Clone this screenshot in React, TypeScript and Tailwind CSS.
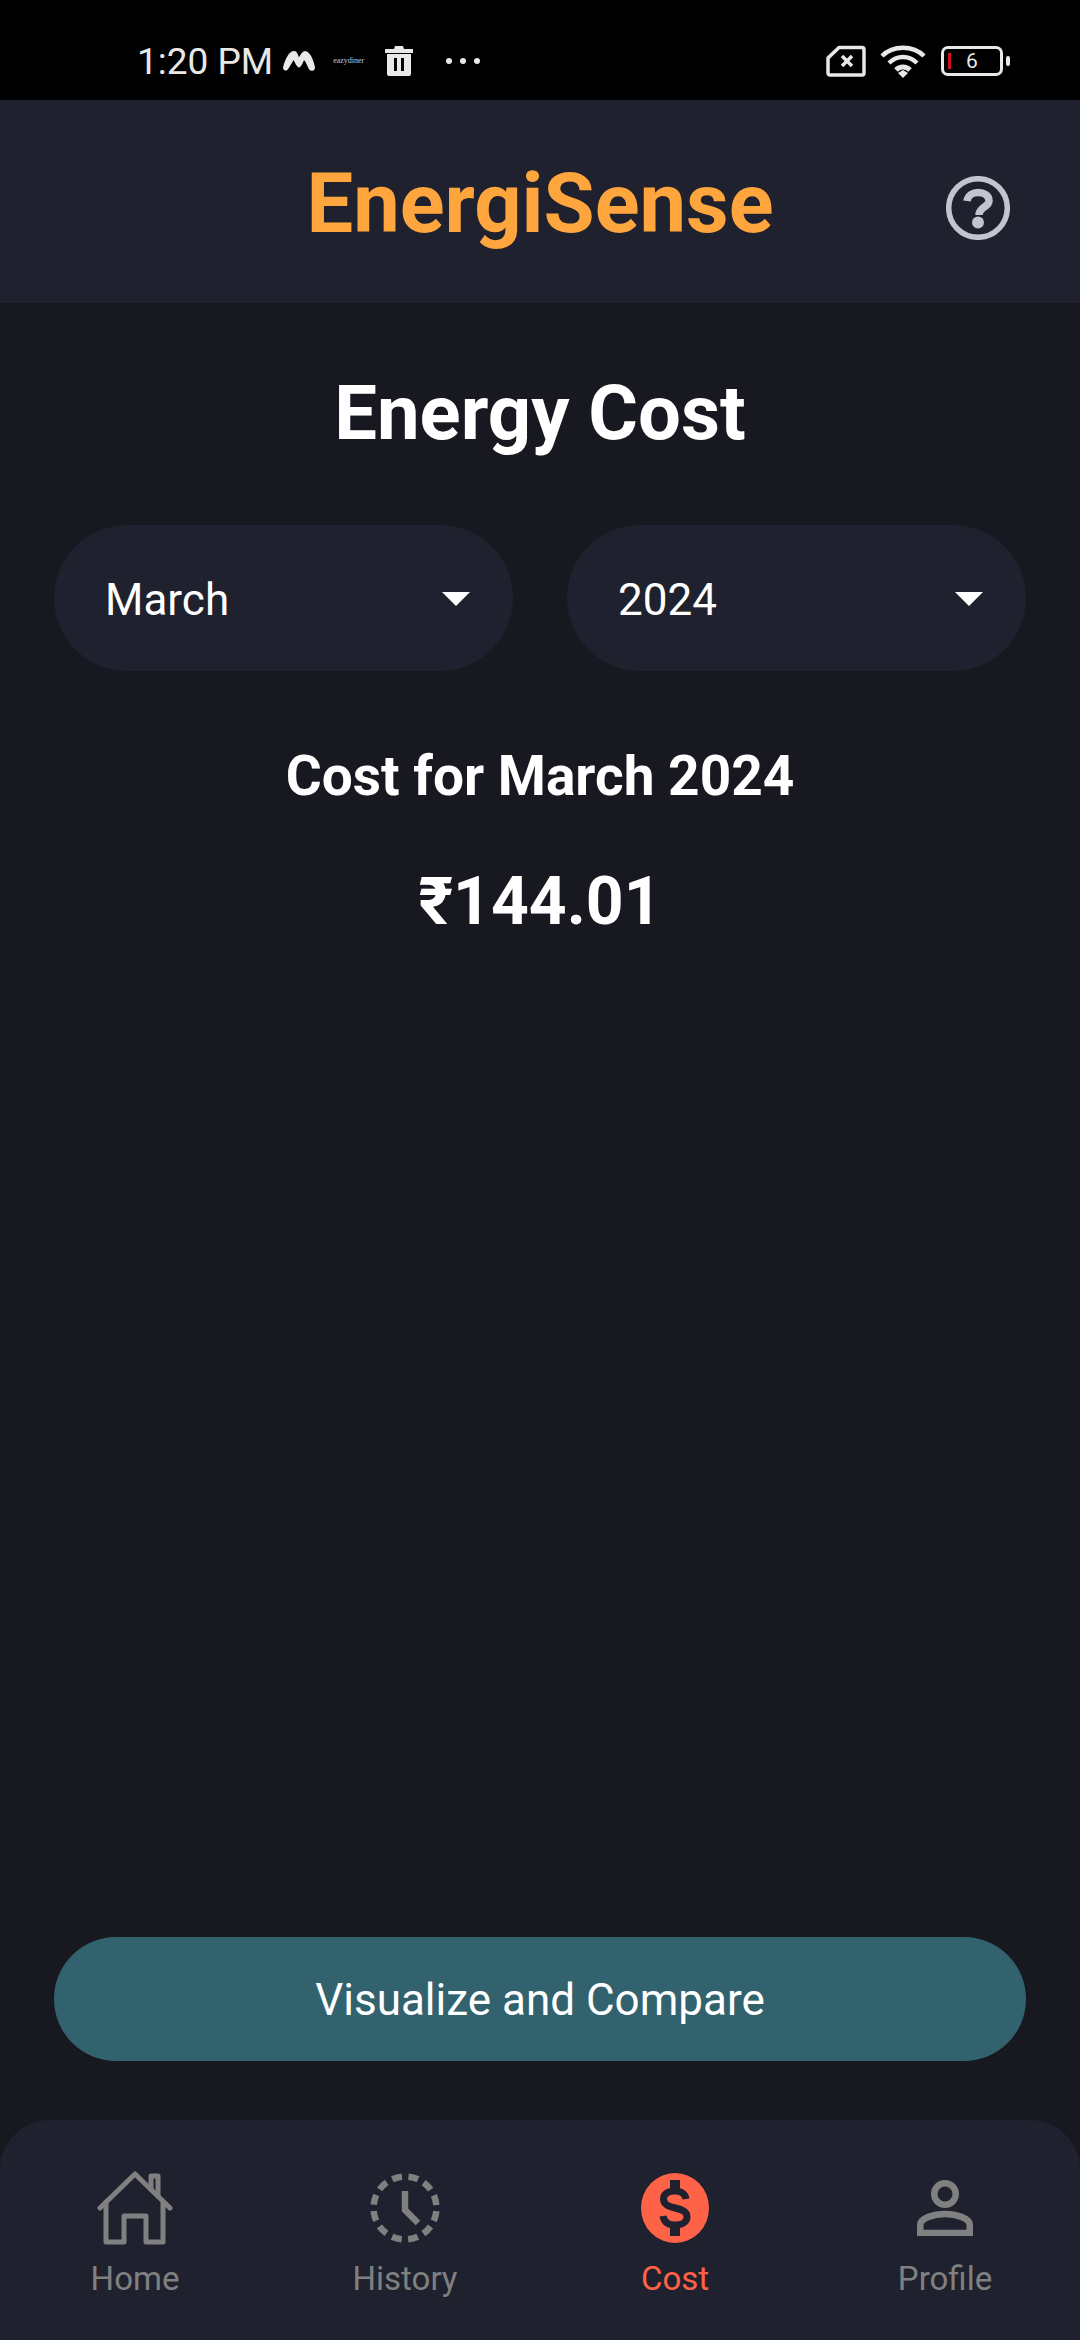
const font = { fontFamily: "Roboto, sans-serif" };

function Caret() {
  return <div className="mt-[2px] w-0 h-0 border-l-[14px] border-r-[14px] border-t-[14px] border-l-transparent border-r-transparent border-t-white" />;
}

function Select({ label }: { label: string }) {
  return (
    <div className="flex-1 h-[146px] rounded-[73px] bg-[#1f222e] flex items-center justify-between pl-[51px] pr-[43px]">
      <span className="text-[44px] text-white mt-[3px]">{label}</span>
      <Caret />
    </div>
  );
}

function StatusBar() {
  return (
    <div className="h-[100px] bg-black flex items-center justify-between pt-[22px] pl-[137px] pr-[70px] text-[#e8e8e8]">
      <div className="flex items-center">
        <span className="text-[37px] leading-none">1:20 PM</span>
        <svg className="ml-[10px]" width="32" height="22" viewBox="0 0 32 24" fill="currentColor" preserveAspectRatio="none">
          <path d="M0 19 C2 10 6 1 11 1 C14 1 15 5 16 8 C18 4 20 1 22 1 C27 1 31 12 32 19 C32 23 28 24 26 21 C24 17 23 13 21 11 C20 14 18 19 16 19 C14 19 12 14 10.500 11 C9 14 7 18 5 21 C3 24 0 22 0 19 Z" />
        </svg>
        <span className="ml-[18px] w-[31px] text-[8px] leading-none text-[#c8c8c8]" style={{ fontFamily: "Liberation Serif, serif" }}>eazydiner</span>
        <svg className="ml-[21px]" width="28" height="30" viewBox="0 0 28 30" fill="currentColor">
          <path d="M10 0h8l1 3h9v4H0V3h9zM2 8h24v20a2 2 0 0 1-2 2H4a2 2 0 0 1-2-2zm7 4v13h3V12zm7 0v13h3V12z" />
        </svg>
        <div className="ml-[33px] flex gap-[8px]">
          <div className="w-[6px] h-[6px] rounded-full bg-[#e8e8e8]" />
          <div className="w-[6px] h-[6px] rounded-full bg-[#e8e8e8]" />
          <div className="w-[6px] h-[6px] rounded-full bg-[#e8e8e8]" />
        </div>
      </div>
      <div className="flex items-center">
        <svg width="40" height="32" viewBox="0 0 40 32" fill="none" stroke="currentColor" strokeWidth="3.500" strokeLinejoin="round">
          <path d="M13 2.500H36a2 2 0 0 1 2 2V28a2 2 0 0 1-2 2H4a2 2 0 0 1-2-2V13z" />
          <path d="M16 11l10 10M26 11L16 21" strokeWidth="3.500" />
        </svg>
        <svg className="ml-[14px]" width="46" height="34" viewBox="0 0 46 34" fill="none" stroke="currentColor" strokeWidth="4.500">
          <path d="M2 12C13 1 33 1 44 12" />
          <path d="M9 19C17 11 29 11 37 19" />
          <path d="M16 26C20 22 26 22 30 26" strokeWidth="5" />
          <path d="M18 29l5-3 5 3-5 5z" fill="currentColor" stroke="none" />
        </svg>
        <div className="ml-[15px] w-[62px] h-[30px] rounded-[7px] border-[3px] border-[#e8e8e8] flex items-center relative">
          <div className="ml-[4px] w-[3px] h-[16px] bg-[#d0121b]" />
          <span className="absolute inset-0 flex items-center justify-center text-[21px] leading-none">6</span>
        </div>
        <div className="ml-[3px] w-[4px] h-[10px] rounded-[2px] bg-[#e8e8e8]" />
      </div>
    </div>
  );
}

function Header() {
  return (
    <div className="h-[203px] bg-[#1f222e] flex items-center justify-center relative">
      <span className="text-[83px] font-bold text-[#ffa53e] mt-[6px]">EnergiSense</span>
      <svg className="absolute right-[70px] top-[76px]" width="64" height="64" viewBox="0 0 64 64" fill="none">
        <circle cx="32" cy="32" r="29.300" stroke="#c1c5cf" strokeWidth="5.500" />
        <path d="M21 25C22 19 27 16.500 32 16.500C38 16.500 43 19 43 25C43 31 33 31 33 39" stroke="#c1c5cf" strokeWidth="7.500" />
        <circle cx="32" cy="46.500" r="6" fill="#c1c5cf" />
      </svg>
    </div>
  );
}

function NavItem({ label, active, icon }: { label: string; active?: boolean; icon: React.ReactNode }) {
  return (
    <div className={`flex-1 flex flex-col items-center ${active ? "text-[#ff6347]" : "text-[#808080]"}`}>
      <div className="h-[72px] flex items-center justify-center">{icon}</div>
      <span className="text-[33px] leading-none mt-[18px]">{label}</span>
    </div>
  );
}

function BottomNav() {
  return (
    <div className="h-[220px] bg-[#1f222e] rounded-t-[50px] flex pt-[52px]">
      <NavItem
        label="Home"
        icon={
          <svg width="76" height="74" viewBox="0 0 76 74" fill="none" stroke="currentColor" strokeWidth="5" strokeLinejoin="round" strokeLinecap="round">
            <path d="M3 37L38 3L73 37" />
            <path d="M9 31V71H27V45H49V71H66V31" />
            <path d="M54 18V5H61V25" />
          </svg>
        }
      />
      <NavItem
        label="History"
        icon={
          <svg width="70" height="70" viewBox="0 0 70 70" fill="none" stroke="currentColor">
            <circle cx="35" cy="35" r="31.500" strokeWidth="6.500" strokeDasharray="10 6.490" strokeDashoffset="-3.245" />
            <path d="M35 18V37L48 50" strokeWidth="6.500" />
          </svg>
        }
      />
      <NavItem
        label="Cost"
        active
        icon={
          <svg width="68" height="70" viewBox="0 0 68 70" fill="none">
            <ellipse cx="34" cy="35" rx="34" ry="35" fill="#ff6347" />
            <path d="M45 26C44 20 39 18 34 18C27 18 22.500 21 22.500 26C22.500 38 46 32 46 44C46 49 41 52 34 52C27 52 23 49 22 43" stroke="#1f222e" strokeWidth="7" />
            <path d="M34 7V18M34 52V63" stroke="#1f222e" strokeWidth="10" />
          </svg>
        }
      />
      <NavItem
        label="Profile"
        icon={
          <svg width="56" height="56" viewBox="0 0 56 56" fill="none" stroke="currentColor" strokeWidth="6.500">
            <circle cx="28" cy="14" r="10.750" />
            <path d="M3.250 53V45C3.250 38 17 34 28 34C39 34 52.750 38 52.750 45V53Z" />
          </svg>
        }
      />
    </div>
  );
}

export default function App() {
  return (
    <div className="w-[1080px] h-[2340px] bg-[#181920] flex flex-col text-white" style={font}>
      <StatusBar />
      <Header />

      <div className="flex-1 flex flex-col px-[54px]">
        <h1 className="text-[76px] font-bold text-center leading-none mt-[72px]">Energy Cost</h1>

        <div className="flex gap-[54px] mt-[74px]">
          <Select label="March" />
          <Select label="2024" />
        </div>

        <p className="text-[55px] font-bold text-center leading-none mt-[78px]">Cost for March 2024</p>
        <p className="text-[66px] font-bold text-center leading-none mt-[65px]">₹144.01</p>

        <div className="mt-auto mb-[59px] h-[124px] rounded-[62px] bg-[#33626f] flex items-center justify-center">
          <span className="text-[44px] text-white mt-[2px]">Visualize and Compare</span>
        </div>
      </div>

      <BottomNav />
    </div>
  );
}
